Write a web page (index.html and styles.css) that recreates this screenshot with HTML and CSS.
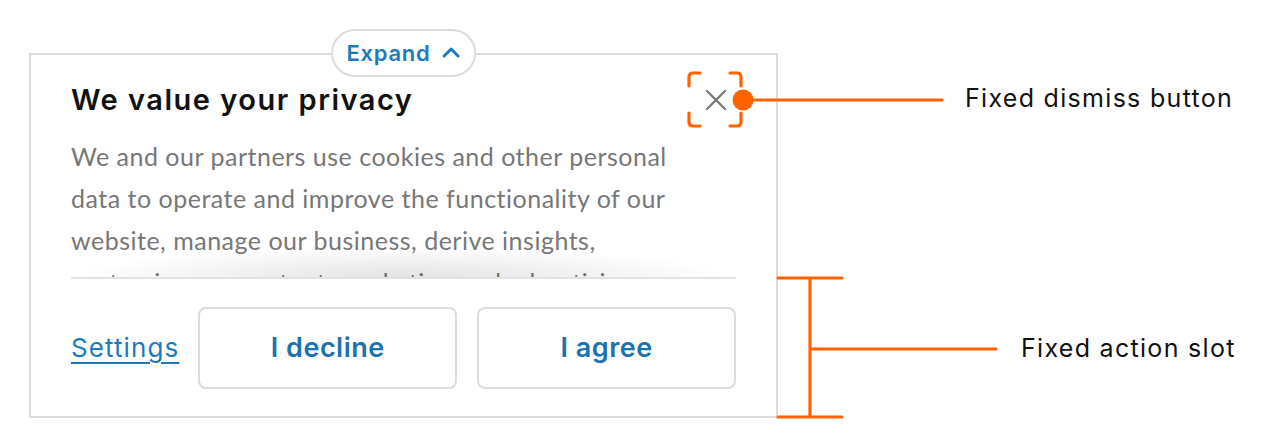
FILE: index.html
```html
<!DOCTYPE html>
<html lang="en">
<head>
    <meta charset="UTF-8">
    <meta name="viewport" content="width=device-width, initial-scale=1.0">
    <title>Consent banner anatomy</title>
    <link rel="stylesheet" href="styles.css">
</head>
<body>

<div class="page">
    <div class="banner">
        <button class="expand">Expand
            <svg width="18" height="12" viewBox="0 0 18 12"><polyline points="2,9 9,2 16,9" fill="none" stroke="#1b7bbd" stroke-width="3" stroke-linecap="round" stroke-linejoin="round"/></svg>
        </button>

        <button class="close" aria-label="Close">
            <svg width="22" height="22" viewBox="0 0 22 22"><path d="M2 2 L20 20 M20 2 L2 20" stroke="#777" stroke-width="2.4" stroke-linecap="round"/></svg>
        </button>

        <div class="scroll">
            <h2>We value your privacy</h2>
            <p>We and our partners use cookies and other personal data to operate and improve the functionality of our website, manage our business, derive insights, customize our content, marketing and advertising.</p>
        </div>
        <div class="divider"></div>

        <div class="actions">
            <a href="#" class="settings">Settings</a>
            <button class="button">I decline</button>
            <button class="button">I agree</button>
        </div>
    </div>

    <!-- annotations -->
    <svg class="marks" width="1278" height="446" viewBox="0 0 1278 446">
        <g fill="none" stroke="#ff6200" stroke-width="3.2" stroke-linecap="round" stroke-linejoin="round">
            <path d="M689 86 V77 Q689 73 693 73 H700"/>
            <path d="M730 73 H737 Q741 73 741 77 V86"/>
            <path d="M689 113 V122 Q689 126 693 126 H700"/>
            <path d="M730 126 H737 Q741 126 741 122 V113"/>
            <path d="M743 100 H942"/>
            <path d="M778 278 H842 M778 417 H842 M810 278 V417 M810 349 H996"/>
        </g>
        <circle cx="743" cy="100" r="10.5" fill="#ff6200"/>
    </svg>
    <div class="label label-dismiss">Fixed dismiss button</div>
    <div class="label label-actions">Fixed action slot</div>
</div>

</body>
</html>
```

FILE: styles.css
```css
body {
    margin: 0;
    background: #fff;
    font-family: Inter, "Noto Sans", sans-serif;
}
.page {
    position: relative;
    width: 1278px;
    height: 446px;
    padding: 53px 0 0 29px;
    box-sizing: border-box;
}
.banner {
    position: relative;
    width: 749px;
    height: 365px;
    box-sizing: border-box;
    border: 2px solid #dcdcdc;
    background: #fff;
    display: flex;
    flex-direction: column;
}
.expand {
    position: absolute;
    top: -26px;
    left: 50%;
    transform: translateX(-50%);
    display: flex;
    align-items: center;
    gap: 12px;
    height: 48px;
    padding: 0 14px;
    background: #fff;
    border: 2px solid #dcdcdc;
    border-radius: 24px;
    color: #1b7bbd;
    font-family: Inter, sans-serif;
    font-size: 22px;
    font-weight: 600;
    letter-spacing: 0.7px;
}
.close {
    position: absolute;
    top: 30px;
    right: 45px;
    width: 30px;
    height: 30px;
    padding: 4px;
    border: none;
    background: none;
}
.scroll {
    height: 222px;
    box-sizing: border-box;
    overflow: hidden;
    padding: 26px 95px 0 40px;
    position: relative;
}
.scroll::after {
    content: "";
    position: absolute;
    left: 40px;
    right: 40px;
    bottom: -30px;
    height: 60px;
    background: radial-gradient(ellipse 50% 50% at 50% 50%, rgba(0, 0, 0, 0.11), rgba(0, 0, 0, 0));
}
h2 {
    margin: 0;
    font-size: 29px;
    font-weight: 600;
    line-height: 38px;
    letter-spacing: 1.5px;
    color: #111;
}
p {
    margin: 16px 0 0;
    font-family: Lato, sans-serif;
    font-size: 25px;
    line-height: 42px;
    letter-spacing: 0.5px;
    color: #777;
}
.divider {
    height: 2px;
    margin: 0 40px;
    background: #e2e2e2;
    position: relative;
}
.actions {
    flex: 1;
    display: flex;
    align-items: center;
    gap: 20px;
    padding: 0 40px;
}
.settings {
    color: #1b7bbd;
    font-size: 26px;
    letter-spacing: 1.1px;
    text-decoration: underline;
    text-decoration-thickness: 2px;
    text-underline-offset: 5px;
    margin-right: -1px;
}
.button {
    flex: 1;
    height: 82px;
    background: #fff;
    border: 2px solid #dcdcdc;
    border-radius: 8px;
    color: #1b72ae;
    font-family: Inter, sans-serif;
    font-size: 27px;
    font-weight: 600;
    letter-spacing: 0.5px;
}
.marks {
    position: absolute;
    top: 0;
    left: 0;
}
.label {
    position: absolute;
    font-size: 25px;
    letter-spacing: 1.3px;
    color: #111;
}
.label-dismiss {
    left: 965px;
    top: 83px;
}
.label-actions {
    left: 1021px;
    top: 333px;
}
```
